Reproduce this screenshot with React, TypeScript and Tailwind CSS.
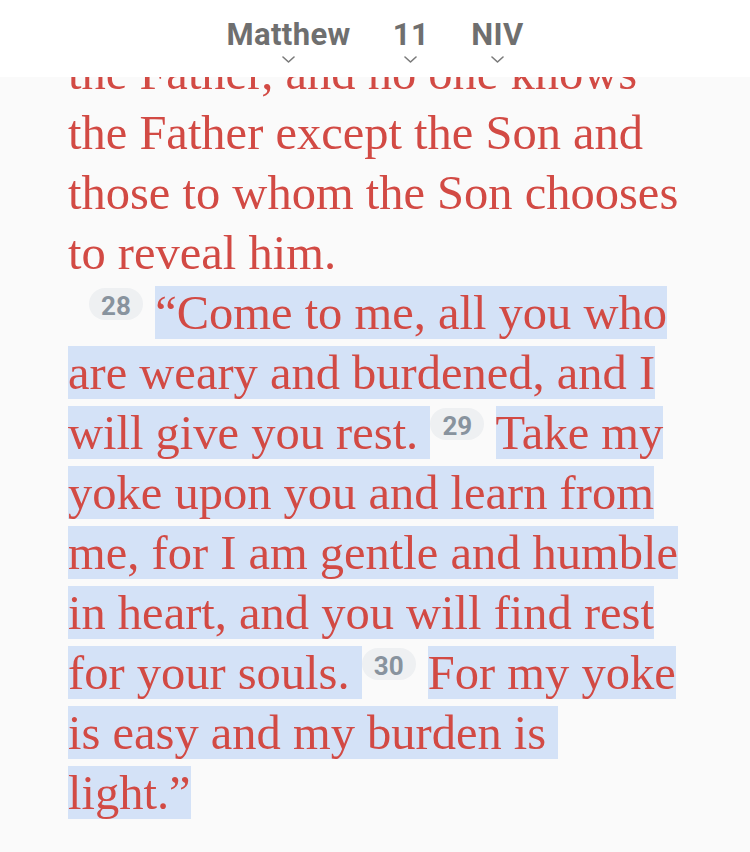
import React from "react";

const serif = { fontFamily: '"Liberation Serif", "Times New Roman", serif' };

function Hl({ children }: { children: React.ReactNode }) {
  return <span className="bg-[#d4e2f7]">{children}</span>;
}

function Pill({ n, className = "" }: { n: string; className?: string }) {
  return (
    <span
      className={
        "inline-flex items-center justify-center align-top mt-[5px] h-[32px] w-[54px] rounded-full bg-[#eef0f2] text-[#88939e] text-[26px] font-bold leading-[32px] " +
        className
      }
      style={{ fontFamily: 'Roboto, "Liberation Sans", sans-serif' }}
    >
      <span className="translate-y-[2px]">{n}</span>
    </span>
  );
}

function Chevron() {
  return (
    <svg width="13" height="7" viewBox="0 0 13 7" className="mt-[6px]">
      <path d="M1 1 L6.5 6 L12 1" fill="none" stroke="#7a7a7a" strokeWidth="1.6" strokeLinecap="round" strokeLinejoin="round" />
    </svg>
  );
}

function NavItem({ label }: { label: string }) {
  return (
    <div className="flex flex-col items-center">
      <span className="text-[31px] font-bold leading-[30px] tracking-[0.4px] text-[#6f6f6f]">{label}</span>
      <Chevron />
    </div>
  );
}

export default function App() {
  const lines: React.ReactNode[] = [
    <>the Father, and no one knows</>,
    <>the Father except the Son and</>,
    <>those to whom the Son chooses</>,
    <>to reveal him.</>,
    <>
      <Pill n="28" className="ml-[21px]" />{" "}
      <Hl>“Come to me, all you who</Hl>
    </>,
    <>
      <Hl>are weary and burdened, and I</Hl>
    </>,
    <>
      <Hl>will give you rest. </Hl>
      <Pill n="29" />{" "}
      <Hl>Take my</Hl>
    </>,
    <>
      <Hl>yoke upon you and learn from</Hl>
    </>,
    <>
      <Hl>me, for I am gentle and humble</Hl>
    </>,
    <>
      <Hl>in heart, and you will find rest</Hl>
    </>,
    <>
      <Hl>for your souls. </Hl>
      <Pill n="30" />{" "}
      <Hl>For my yoke</Hl>
    </>,
    <>
      <Hl>is easy and my burden is </Hl>
    </>,
    <>
      <Hl>light.”</Hl>
    </>,
  ];

  return (
    <div className="relative h-[852px] w-[750px] overflow-hidden bg-[#fafafa]">
      <div
        className="absolute inset-x-0 top-0 z-10 h-[77px] bg-white"
        style={{ fontFamily: 'Roboto, "Liberation Sans", sans-serif' }}
      >
        <div className="flex justify-center gap-[42px] pt-[20px]">
          <NavItem label="Matthew" />
          <NavItem label="11" />
          <NavItem label="NIV" />
        </div>
      </div>
      <div className="px-[68px] pt-[43px] text-[48.5px] leading-[60px] text-[#d24a44]" style={serif}>
        {lines.map((l, i) => (
          <div key={i} className="whitespace-pre">
            {l}
          </div>
        ))}
      </div>
    </div>
  );
}
